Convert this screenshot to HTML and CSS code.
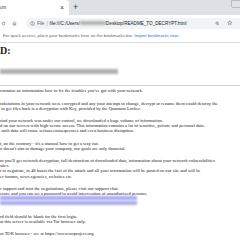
FILE: index.html
```html
<!DOCTYPE html>
<html lang="en">
<head>
  <meta charset="UTF-8">
  <meta name="viewport" content="width=device-width, initial-scale=1.0">
  <title>README_TO_DECRYPT</title>
  <link rel="stylesheet" href="styles.css">
</head>
<body>
  <div class="tabstrip">
    <div class="tab">
      <span class="tab-title">um</span>
      <span class="tab-close">&#215;</span>
    </div>
    <span class="tab-new">+</span>
    <span class="tab-search"></span>
  </div>

  <div class="toolbar">
    <svg class="tool-icon" viewBox="0 0 24 24"><path d="M19 12a7 7 0 1 1-2.1-5M19 4v5h-5" fill="none" stroke="#5f6368" stroke-width="2.4"/></svg>
    <svg class="tool-icon home" viewBox="0 0 24 24"><path d="M4 11l8-7 8 7M6 9v11h4v-6h4v6h4V9" fill="none" stroke="#5f6368" stroke-width="2.4"/></svg>
    <div class="omnibox">
      <svg class="info" viewBox="0 0 24 24"><circle cx="12" cy="12" r="9" fill="none" stroke="#5f6368" stroke-width="2.4"/><path d="M12 11v6M12 7v2" stroke="#5f6368" stroke-width="2.4"/></svg>
      <span class="scheme">File</span>
      <span class="sep">|</span>
      <span class="url">file:///C:/Users/<span class="url-hidden"></span>/Desktop/README_TO_DECRYPT.html</span>
      <svg class="zoom" viewBox="0 0 24 24"><circle cx="10" cy="10" r="6" fill="none" stroke="#5f6368" stroke-width="2.4"/><path d="M14.5 14.5L20 20M7 10h6" stroke="#5f6368" stroke-width="2.4"/></svg>
      <svg class="star" viewBox="0 0 24 24"><path d="M12 3l2.7 5.8 6.3.7-4.7 4.3 1.3 6.2L12 16.9 6.4 20l1.3-6.2L3 9.5l6.3-.7z" fill="none" stroke="#5f6368" stroke-width="2.2" stroke-linejoin="round"/></svg>
    </div>
  </div>

  <div class="bookmarks">
    For quick access, place your bookmarks here on the bookmarks bar.
    <span class="import">Import bookmarks now...</span>
  </div>

  <div class="note">
    <h1>D:</h1>
    <div class="redacted"></div>
    <hr>

    <p>contains an information how to fix the troubles you've got with your network.</p>
    <p>orkstations in your network were encrypted and any your attempt to change, decrypt or rename them could destroy the<br>
    &nbsp;to get files back is a decryption with Key, provided by the Quantum Locker.</p>
    <p>riod your network was under our control, we downloaded a huge volume of information.<br>
    d on our servers with high-secure access. This information contains a lot of sensitive, private and personal data.<br>
    &nbsp;such data will cause serious consequences and even business disruption.</p>
    <p>t, on the contrary - it's a manual how to get a way out.<br>
    n doesn't aim to damage your company, our goals are only financial.</p>
    <p>nt you'll get network decryption, full destruction of downloaded data, information about your network vulnerabilities<br>
    sites.<br>
    t to negotiate, in 48 hours the fact of the attack and all your information will be posted on our site and will be<br>
    er forums, news agencies, websites etc.</p>
    <p>r support and start the negotiations, please visit our support chat.<br>
    ecure and you can set a password to avoid intervention of unauthorized persons.<br>
    <span class="link-hidden"></span><br>
    <span class="link-hidden"></span></p>
    <p>rd field should be blank for the first login.<br>
    at this server is available via Tor browser only.</p>
    <p>ut TOR browser - see at https://www.torproject.org</p>
  </div>
</body>
</html>
```

FILE: styles.css
```css
body {
  margin: 0;
  width: 240px;
  height: 240px;
  overflow: hidden;
  background: #fff;
  font-family: "Liberation Sans", Arial, sans-serif;
}

/* browser chrome */
.tabstrip {
  display: flex;
  align-items: flex-end;
  height: 15px;
  background: #dee1e6;
  position: relative;
}
.tab {
  display: flex;
  align-items: center;
  justify-content: space-between;
  width: 69px;
  height: 15px;
  padding: 0 5px 0 0;
  box-sizing: border-box;
  background: #fff;
  border-radius: 0 4px 0 0;
  font-size: 4.5px;
  color: #3c4043;
}
.tab-close {
  font-size: 7px;
  color: #3c4043;
}
.tab-new {
  margin: 0 0 3px 4px;
  font-size: 9px;
  line-height: 9px;
  color: #3c4043;
}
.tab-search {
  position: absolute;
  right: -2px;
  top: 0;
  width: 9px;
  height: 6px;
  border: 1px solid #b8bbbf;
  border-radius: 0 0 0 2px;
}

.toolbar {
  display: flex;
  align-items: center;
  height: 16px;
  padding-left: 1px;
  background: #fff;
}
.tool-icon {
  width: 5px;
  height: 5px;
  margin-right: 6px;
}
.tool-icon.home {
  margin-right: 9px;
}
.omnibox {
  display: flex;
  align-items: center;
  flex: 1;
  height: 11px;
  margin-right: -20px;
  padding-left: 4px;
  background: #f1f3f4;
  border-radius: 6px;
  font-size: 4.6px;
  white-space: nowrap;
}
.info {
  width: 5px;
  height: 5px;
  margin-right: 2px;
}
.scheme {
  color: #5f6368;
}
.sep {
  margin: 0 2px 0 2px;
  color: #9aa0a6;
}
.url {
  color: #202124;
  width: 150px;
}
.url-hidden {
  display: inline-block;
  width: 25px;
  height: 4px;
  background: #b4b4b4;
  filter: blur(0.8px);
}
.zoom {
  width: 5px;
  height: 5px;
  margin-left: 15px;
}
.star {
  width: 5.5px;
  height: 5.5px;
  margin-left: 7px;
}

.bookmarks {
  height: 11px;
  line-height: 9px;
  padding-left: 3px;
  border-bottom: 1px solid #dadce0;
  font-size: 4.3px;
  color: #5f6368;
  white-space: nowrap;
}
.import {
  color: #1a73e8;
}

/* page content */
.note {
  font-family: "Liberation Serif", "Times New Roman", serif;
  color: #222;
  white-space: nowrap;
}
.note h1 {
  margin: 2px 0 0;
  font-size: 10px;
  line-height: 12px;
}
.redacted {
  width: 118px;
  height: 5px;
  margin-top: 12px;
  background: #b0b0b0;
  filter: blur(1px);
}
.note hr {
  margin: 11px 0 0;
  border: none;
  border-top: 1px solid #d4d4d4;
}
.note p {
  margin: 2.4px 0 7px;
  font-size: 4.6px;
  line-height: 5.2px;
}
.link-hidden {
  display: inline-block;
  width: 137px;
  height: 4px;
  background: #a7acf2;
  filter: blur(0.8px);
}
```
